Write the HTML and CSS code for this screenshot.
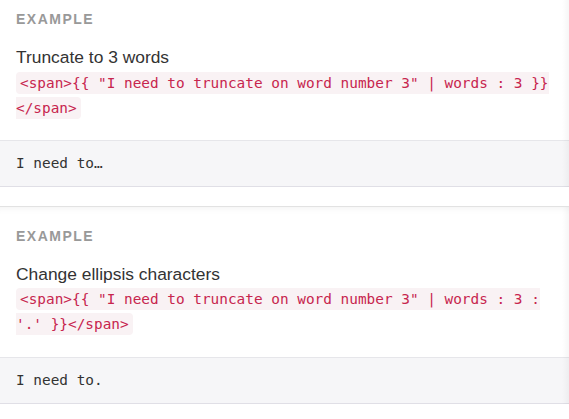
FILE: index.html
```html
<!DOCTYPE html>
<html>
<head>
<meta charset="utf-8">
<link rel="stylesheet" href="styles.css">
</head>
<body>
<div class="page">
  <section class="card">
    <div class="card-body">
      <div class="label">Example</div>
      <h3 class="title">Truncate to 3 words</h3>
      <div class="snippet"><code>&lt;span&gt;{{ "I need to truncate on word number 3" | words : 3 }}&lt;/span&gt;</code></div>
    </div>
    <div class="card-footer">I need to…</div>
  </section>
  <section class="card">
    <div class="card-body">
      <div class="label">Example</div>
      <h3 class="title">Change ellipsis characters</h3>
      <div class="snippet"><code>&lt;span&gt;{{ "I need to truncate on word number 3" | words : 3 : '.' }}&lt;/span&gt;</code></div>
    </div>
    <div class="card-footer">I need to.</div>
  </section>
</div>
</body>
</html>
```
FILE: styles.css
```css
html, body {
  margin: 0;
  padding: 0;
  background: #ffffff;
}

.page {
  display: flex;
  flex-direction: column;
  gap: 18.5px;
  margin-top: -11px;
}

.card {
  position: relative;
  background: #ffffff;
  border-top: 1px solid #e2e2e2;
  box-shadow: inset 0 8px 8px -8px rgba(0, 0, 0, 0.07);
}

.card::after {
  content: "";
  position: absolute;
  top: 0;
  right: 0;
  bottom: 0;
  width: 7px;
  background: linear-gradient(to right, rgba(0, 0, 0, 0), rgba(0, 0, 0, 0.035));
  pointer-events: none;
}

.card-body {
  padding: 19px 16px 19.5px 16px;
}

.label {
  font-family: "Liberation Sans", Arial, sans-serif;
  font-weight: bold;
  font-size: 14px;
  line-height: 20px;
  letter-spacing: 1.5px;
  text-transform: uppercase;
  color: #999999;
  margin-bottom: 16px;
}

.title {
  margin: 0 0 1.5px 0;
  font-family: "Liberation Sans", Arial, sans-serif;
  font-weight: normal;
  font-size: 17.4px;
  line-height: 24px;
  color: #333333;
}

.snippet {
  font-family: "DejaVu Sans Mono", monospace;
  font-size: 14.4px;
  line-height: 25px;
}

.snippet code {
  font-family: "DejaVu Sans Mono", monospace;
  font-size: 14.4px;
  color: #c7254e;
  background: #f9f2f4;
  border-radius: 4px;
  padding: 3px 4px;
}

.card-footer {
  background: #f6f6f8;
  border-top: 1px solid #e6e6ea;
  border-bottom: 1px solid #e0dfe6;
  padding: 12px 16px;
  font-family: "DejaVu Sans Mono", monospace;
  font-size: 14.4px;
  line-height: 21px;
  color: #333333;
}
```
